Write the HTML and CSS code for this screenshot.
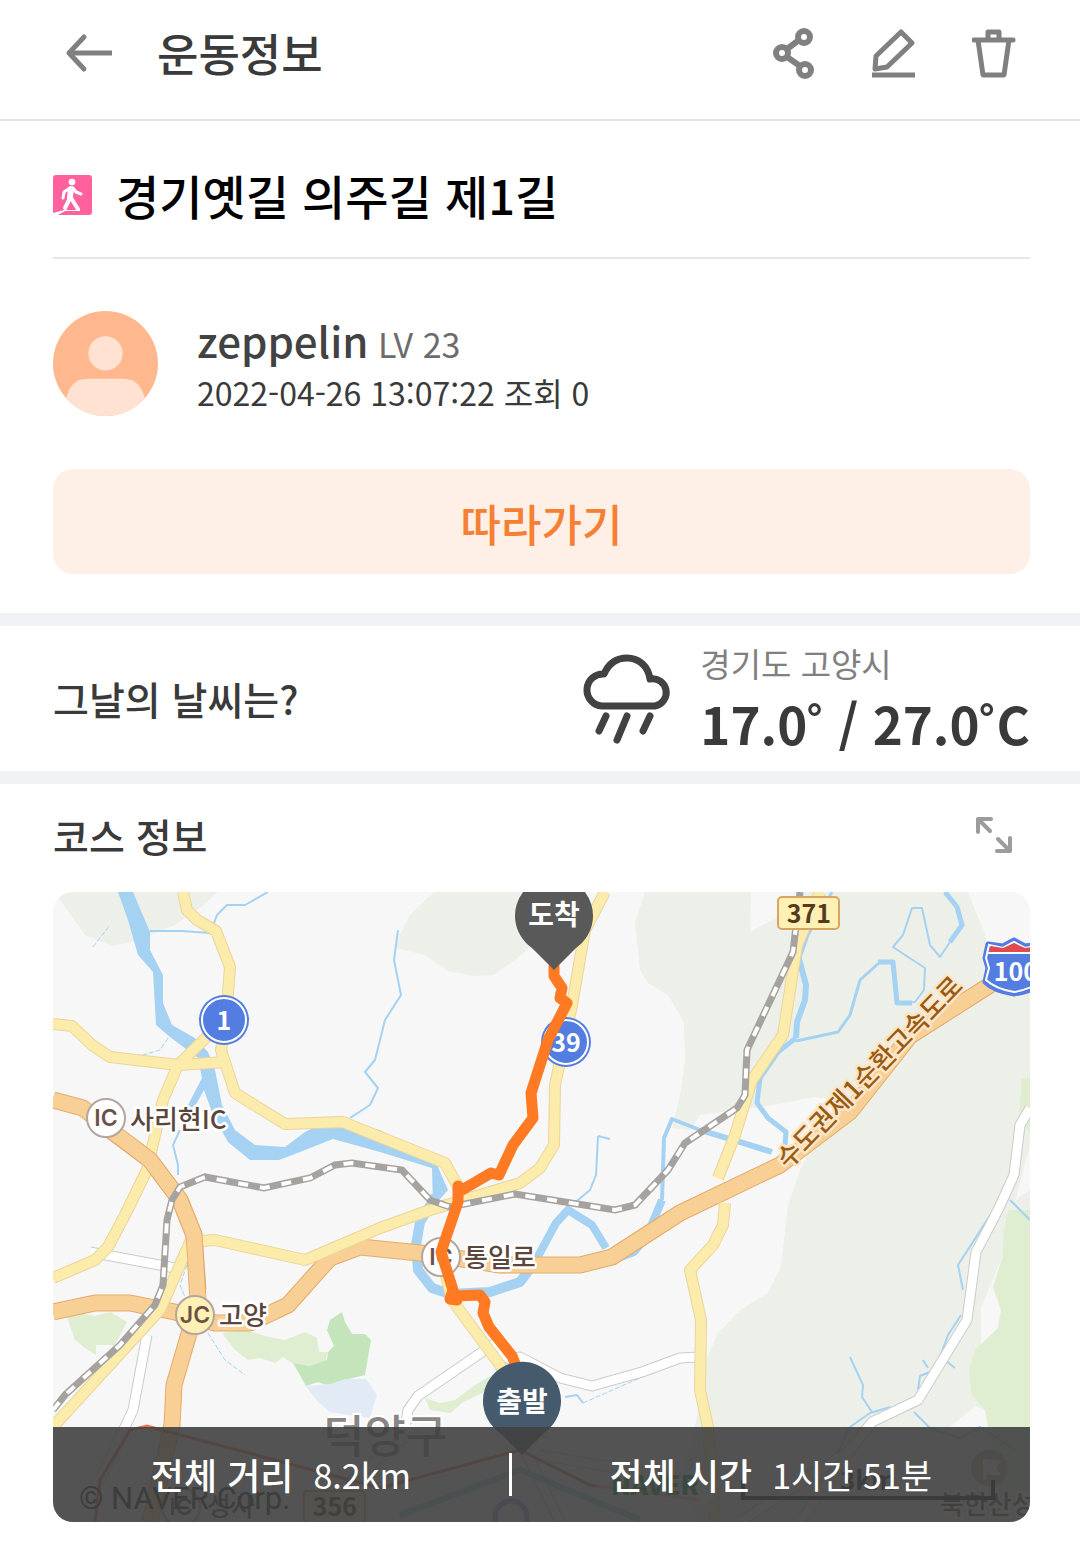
FILE: index.html
```html
<!DOCTYPE html>
<html lang="ko">
<head>
    <meta charset="UTF-8">
    <meta name="viewport" content="width=device-width, initial-scale=1">
    <title>운동정보</title>
    <link rel="stylesheet" href="styles.css">
</head>
<body>
    <header class="top-bar">
        <button class="icon-button" type="button" aria-label="뒤로">
            <svg width="48" height="52" viewBox="0 0 48 52" fill="none" stroke="#808080" stroke-width="5" stroke-linecap="round" stroke-linejoin="round"><path d="M20 10 5 26 20 42"/><path d="M5 26H48" stroke-linecap="butt"/></svg>
        </button>
        <h1>운동정보</h1>
        <div class="actions">
            <button class="icon-button" type="button" aria-label="공유">
                <svg width="44" height="52" viewBox="0 0 44 52" fill="none" stroke="#808080" stroke-width="6"><circle cx="32" cy="10" r="6"/><circle cx="10" cy="26" r="6"/><circle cx="33" cy="43" r="6"/><path d="M15 22 27 13M15 30 28 39"/></svg>
            </button>
            <button class="icon-button" type="button" aria-label="수정">
                <svg width="44" height="52" viewBox="0 0 44 52" fill="none" stroke="#808080" stroke-width="5" stroke-linejoin="round"><path d="M29 5 40 16 15 40 3 42 4 29Z"/><path d="M0 48H43"/></svg>
            </button>
            <button class="icon-button" type="button" aria-label="삭제">
                <svg width="44" height="52" viewBox="0 0 44 52" fill="none" stroke="#808080" stroke-width="5" stroke-linejoin="round" stroke-linecap="round"><path d="M2 13H41M16 12V5H27V12M6 13 11 48H32L37 13"/></svg>
            </button>
        </div>
    </header>

    <main>
        <section class="workout">
            <div class="workout-title">
                <svg width="39" height="40" viewBox="0 0 39 40"><rect width="39" height="40" rx="3" fill="#ff619d"/><circle cx="19" cy="7" r="3.3" fill="#fff"/><g fill="none" stroke="#fff" stroke-linecap="round" stroke-linejoin="round"><path stroke-width="3" d="M17 13 11 17 10 23M20 13 23 17 28 19"/><path stroke-width="6" d="M18 14 17 22"/><path stroke-width="4" d="M18 23 25 34M17 23 12 33"/></g><path fill="#fff" d="M0 40V38L11 35H27V36H12L5 40Z"/></svg>
                <h2>경기옛길 의주길 제1길</h2>
            </div>
            <div class="user">
                <svg class="avatar" viewBox="0 0 104 104"><clipPath id="face"><circle cx="52" cy="52" r="52"/></clipPath><g clip-path="url(#face)"><rect width="104" height="104" fill="#ffb88d"/><g fill="#ffe2d1"><circle cx="52" cy="42" r="17"/><path d="M12 104V91Q16 67 34 67H70Q88 67 92 91V104Z"/></g></g></svg>
                <div class="user-info">
                    <p class="user-name"><strong>zeppelin</strong> <span>LV 23</span></p>
                    <p class="user-date">2022-04-26 13:07:22 조회 0</p>
                </div>
            </div>
            <button class="follow" type="button">따라가기</button>
        </section>

        <section class="weather">
            <h3>그날의 날씨는?</h3>
            <svg width="90" height="92" viewBox="0 0 90 92" fill="none" stroke="#424242" stroke-width="7" stroke-linecap="round" stroke-linejoin="round"><path d="M20 54H73A13 13 0 0 0 68 27C66 14 57 6 45 6S26 13 22 22A16 16 0 0 0 20 54Z"/><path d="M24 64 17 79M45 64 35 88M68 64 61 79"/></svg>
            <div class="weather-info">
                <p class="place">경기도 고양시</p>
                <p class="temp">17.0˚ / 27.0˚C</p>
            </div>
        </section>

        <section class="course">
            <div class="course-head">
                <h3>코스 정보</h3>
                <button class="icon-button" type="button" aria-label="크게 보기">
                    <svg width="36" height="36" viewBox="0 0 36 36" fill="none" stroke="#9c9c9c" stroke-width="4" stroke-linecap="round" stroke-linejoin="round"><path d="M2 15V2H15M3 3 14 14M21 34H34V21M33 33 22 22"/></svg>
                </button>
            </div>
            <div class="map">
                <svg class="map-canvas" viewBox="53 892 977 630">
                    <rect class="land" x="53" y="892" width="977" height="630"/>
                    <!-- hills -->
                    <g class="hill">
                        <path d="M53 892 60 900 85 935 112 946 135 941 175 925 200 908 218 892Z"/>
                        <path d="M434 892 410 915 400 935 396 948 425 955 448 971 475 976 493 975 515 960 550 930V892Z"/>
                        <path d="M645 892 635 922 640 970 648 983 668 995 684 1022 685 1060 680 1095 672 1128 690 1130 700 1115 760 1107 815 1097 840 1100 820 1130 800 1170 788 1205 784 1240 781 1267 768 1293 740 1310 718 1333 706 1360 695 1427 680 1480 700 1522H1030V892Z"/>
                    </g>
                    <g class="land">
                        <path d="M751 892 750 932 790 910 800 892Z"/>
                        <path d="M968 892 985 935 995 975H1030V892Z"/>
                        <path d="M1030 1145 1018 1190 1003 1255 981 1308V1345L1010 1330 1015 1200 1030 1190Z"/>
                        <path d="M950 1427 975 1406 990 1412V1427Z"/>
                    </g>
                    <g class="park">
                        <path d="M1030 1210H1010Q1004 1212 1003 1255L993 1287 1001 1310 998 1328 975 1350 969 1370 971 1393 985 1410 988 1427 1000 1500H1030Z"/>
                        <path d="M1030 1077 1022 1079 1019 1110 1030 1135Z"/>
                        <path d="M67 1317 80 1313 95 1316 110 1312 127 1322 115 1345 96 1345V1355L85 1348 75 1340Z"/>
                        <path d="M222 1333 245 1330 265 1336 285 1340 305 1332 317 1338 319 1352 328 1352 325 1362 310 1366 292 1363 283 1357 275 1363 260 1358 248 1360 235 1350Z"/>
                        <path d="M425 1398 440 1403 455 1400 475 1385 492 1375 484 1392 462 1403 450 1413 430 1410Z"/>
                    </g>
                    <path fill="#c4e5bb" d="M342 1312 345 1322 352 1334 365 1334 371 1340 365 1375 345 1380 328 1386 318 1382 306 1386 293 1363 310 1366 327 1360 328 1352 334 1346 327 1330 330 1320Z"/>
                    <path fill="#e2ebf5" d="M306 1386 330 1384 345 1379 366 1379 377 1395 370 1418 330 1412 318 1402Z"/>
                    <!-- rivers -->
                    <path class="river-fill" d="M118 892H133L150 932V950L163 975V1003L172 1025 195 1038 208 1052 215 1070 222 1105 235 1130 255 1145 285 1147 305 1132 330 1120 380 1130 435 1160 448 1190 433 1207 432 1168 380 1152 333 1139 300 1152 279 1160H250L228 1142 213 1115 204 1090 193 1110 188 1105 202 1078 198 1058 170 1037 156 1025 153 972 138 955 128 920Z"/>
                    <g class="river">
                        <path stroke-width="10" d="M436 1196 420 1222 416 1245 418 1270 432 1288 450 1294 490 1292 520 1282 535 1262"/>
                        <path stroke-width="8" d="M535 1262 556 1223 568 1210 592 1225 606 1248M618 1258 634 1252 646 1238 662 1200"/>
                        <path stroke-width="4" d="M662 1200 664 1138 672 1119 700 1130"/>
                        <path stroke-width="6" d="M700 1130 740 1142 772 1152M798 955 806 985 805 1000 797 1022 796 1038"/>
                        <path stroke-width="5" d="M796 1038 778 1052 760 1078 757 1103 768 1118 786 1132 785 1145"/>
                        <path stroke-width="3" d="M832 892 808 935 800 958M796 1041 838 1032 850 1015 860 980 880 962"/>
                        <path stroke-width="2" d="M897 1003 915 1002 924 990 925 968 905 955 893 947 903 935 912 908 922 908 930 945 940 957 950 942"/>
                        <path stroke-width="5" d="M878 962H893L897 1003H912M945 892 957 907 962 925 950 942"/>
                        <path stroke-width="2" d="M150 931 182 931 210 933 217 915 227 905H245L268 892M398 930 394 960 398 980 401 995 385 1020 375 1060 365 1072 378 1088 370 1105 350 1118M180 1130 173 1145 178 1165V1175M598 1136 596 1175 590 1190 572 1205M598 1136 610 1139M538 1085 530 1120"/>
                        <path stroke-width="2" d="M1000 1200 958 1265 963 1290M961 1315 948 1335 935 1370 920 1376 918 1390M850 1357 863 1385 862 1397 872 1412M890 1407 870 1413 850 1427 820 1490M923 1360 928 1368M945 1360 955 1368M914 1412 930 1428 960 1438 980 1427 1015 1450M1010 1200 1030 1220M565 1397 577 1395 583 1403"/>
                        <path stroke-width="1" stroke-dasharray="5 2" d="M93 947 110 925M168 1038 160 1050 140 1056M187 1230V1265L180 1285 185 1297M208 1333 225 1360 245 1375M583 1403 640 1378 680 1362"/>
                    </g>
                    <!-- minor roads -->
                    <g class="road">
                        <path class="minor-edge" d="M1030 1108 1020 1125 1014 1175 998 1210 976 1252 967 1320 918 1400 872 1422 850 1450 800 1522M90 1252 175 1268M147 1335 133 1410 100 1480M405 1427 408 1410 418 1396 485 1350 500 1340M485 1345 515 1362 520 1357 560 1378 592 1386 642 1372 680 1358 700 1357M515 1430 560 1522M540 1455 690 1480M415 1427 330 1500M850 1450 740 1522"/>
                        <path class="minor" d="M1030 1108 1020 1125 1014 1175 998 1210 976 1252 967 1320 918 1400 872 1422 850 1450 800 1522M90 1252 175 1268M147 1335 133 1410 100 1480M405 1427 408 1410 418 1396 485 1350 500 1340M485 1345 515 1362 520 1357 560 1378 592 1386 642 1372 680 1358 700 1357M515 1430 560 1522M540 1455 690 1480M415 1427 330 1500M850 1450 740 1522"/>
                    </g>
                    <!-- highways -->
                    <g class="road">
                        <path class="highway-edge" d="M53 1100 83 1108 110 1130 150 1160 180 1200 194 1235 198 1300 190 1330 174 1385 172 1425 150 1522M53 1312 95 1303H130L175 1312 215 1323 250 1323 288 1305 330 1258 360 1247 430 1254 500 1265 580 1265 612 1257 680 1213 780 1165 850 1112 910 1036 990 985 1030 962"/>
                        <path class="highway" d="M53 1100 83 1108 110 1130 150 1160 180 1200 194 1235 198 1300 190 1330 174 1385 172 1425 150 1522M53 1312 95 1303H130L175 1312 215 1323 250 1323 288 1305 330 1258 360 1247 430 1254 500 1265 580 1265 612 1257 680 1213 780 1165 850 1112 910 1036 990 985 1030 962"/>
                        <path class="main-edge" d="M183 892 187 910 197 920 216 931 230 967 226 1020 221 1050 235 1093 285 1124 343 1122 370 1133 445 1163 460 1190M53 1024 72 1026 92 1045 110 1057 178 1065 225 1062M222 1022 178 1065 163 1100 147 1170 125 1215 108 1247 95 1260 53 1278M605 892 585 930 572 1005 555 1085 554 1145 540 1168 520 1183 480 1195 430 1210 380 1228 305 1260 215 1240 190 1242 160 1310 53 1427M443 1263 452 1300 500 1365 540 1440M820 892 797 945 783 1035 752 1080 735 1135 718 1178M725 1203 723 1225 713 1245 690 1270 701 1320 700 1390 708 1427 715 1522"/>
                        <path class="main" d="M183 892 187 910 197 920 216 931 230 967 226 1020 221 1050 235 1093 285 1124 343 1122 370 1133 445 1163 460 1190M53 1024 72 1026 92 1045 110 1057 178 1065 225 1062M222 1022 178 1065 163 1100 147 1170 125 1215 108 1247 95 1260 53 1278M605 892 585 930 572 1005 555 1085 554 1145 540 1168 520 1183 480 1195 430 1210 380 1228 305 1260 215 1240 190 1242 160 1310 53 1427M443 1263 452 1300 500 1365 540 1440M820 892 797 945 783 1035 752 1080 735 1135 718 1178M725 1203 723 1225 713 1245 690 1270 701 1320 700 1390 708 1427 715 1522"/>
                        <path class="highway-edge" d="M110 1130 150 1160 180 1200 194 1235 198 1290"/>
                        <path class="highway" d="M108 1128 150 1160 180 1200 194 1235 198 1300"/>
                    </g>
                    <!-- railway -->
                    <path class="rail" d="M53 1410 65 1395 120 1345 155 1305 163 1285 167 1220 172 1200 180 1187 205 1177 264 1188 310 1178 335 1165 352 1163 402 1170 430 1200 450 1207 515 1194 615 1210 635 1205 668 1170 685 1143 737 1108 745 1095 747 1050 793 952 800 892"/>
                    <path class="rail-dash" d="M53 1410 65 1395 120 1345 155 1305 163 1285 167 1220 172 1200 180 1187 205 1177 264 1188 310 1178 335 1165 352 1163 402 1170 430 1200 450 1207 515 1194 615 1210 635 1205 668 1170 685 1143 737 1108 745 1095 747 1050 793 952 800 892"/>
                    <!-- subway -->
                    <path fill="none" stroke="#ef7350" stroke-width="3" d="M95 1522 100 1480 130 1430 147 1426 350 1480 380 1488 520 1450 590 1485 700 1500M1000 1510 960 1500"/>
                    <path fill="none" stroke="#a5d2f3" stroke-width="6" d="M400 1515 520 1470 640 1520"/>

                    <!-- road signs -->
                    <g class="sign">
                        <circle cx="224" cy="1020" r="25" fill="#537de0"/><circle cx="224" cy="1020" r="22" fill="#537de0" stroke="#fff" stroke-width="2"/>
                        <text x="224" y="1030" fill="#fff">1</text>
                        <circle cx="566" cy="1042" r="25" fill="#537de0"/><circle cx="566" cy="1042" r="22" fill="#537de0" stroke="#fff" stroke-width="2"/>
                        <text x="566" y="1052" fill="#fff">39</text>
                        <rect x="778" y="897" width="61" height="32" rx="4" fill="#fff1b4" stroke="#d9a566" stroke-width="2"/>
                        <text x="809" y="923" fill="#553b1c">371</text>
                        <path fill="#537de0" stroke="#537de0" stroke-width="5" stroke-linejoin="round" d="M988 944 1003 946 1014 940 1025 946 1040 944 1044 958 1041 968 1044 982Q1034 991 1014 994 994 991 985 982L988 968 985 958Z"/>
                        <path fill="#537de0" stroke="#fff" stroke-width="2" d="M989 945 1003 948 1014 942 1025 948 1039 945 1043 958 1040 968 1042 980Q1032 989 1014 992 996 989 986 980L989 968 986 958Z"/>
                        <path fill="#df4b51" d="M991 946 1003 948 1014 943 1025 948 1038 946 1040 952H989Z"/><path stroke="#fff" stroke-width="2" d="M988 953H1040"/>
                        <text x="1016" y="981" fill="#fff">100</text>
                        <rect x="304" y="1491" width="61" height="32" rx="4" fill="#fff1b4" stroke="#d9a566" stroke-width="2"/>
                        <text x="335" y="1516" fill="#553b1c">356</text>
                    </g>
                    <g class="junction">
                        <circle cx="106" cy="1118" r="19"/><text x="106" y="1126">IC</text>
                        <circle cx="441" cy="1257" r="19"/><text x="441" y="1265">IC</text>
                        <circle cx="195" cy="1315" r="19" fill="#fff1b4"/><text x="195" y="1323">JC</text>
                        <circle cx="181" cy="1507" r="19"/><text x="181" y="1515">IC</text>
                    </g>
                    <g class="place-label">
                        <text x="130" y="1129">사리현IC</text>
                        <text x="464" y="1267">통일로</text>
                        <text x="219" y="1325">고양</text>
                        <text x="207" y="1516">성사</text>
                        <text x="940" y="1514">북한산성</text>
                    </g>
                    <text class="district" x="323" y="1453">덕양구</text>
                    <text class="highway-label" transform="translate(788 1170) rotate(-46)">수도권제1순환고속도로</text>
                    <circle cx="989" cy="1468" r="18" fill="#c7b49b"/><path fill="#fff" d="M983 1459 1002 1461 996 1467 1001 1475H986V1480H983Z"/>
                    <circle cx="511" cy="1517" r="16" fill="none" stroke="#8ca8dc" stroke-width="5"/>

                    <path class="route" d="M554 966V976L562 988 560 998 567 1003 548 1040 531 1093 533 1118 513 1145 499 1175 491 1173 462 1190 458 1186 458 1202 441 1252 453 1290 450 1299 457 1300 455 1296 480 1295 485 1302 483 1313 489 1327 512 1356 516 1366"/>
                    <g class="marker">
                        <path fill="#595959" d="M554 970 532 948A39 39 0 1 1 576 948Z"/><text x="554" y="925">도착</text>
                        <path fill="#465a6e" d="M522 1455 500 1433A39 39 0 1 1 544 1433Z"/><text x="522" y="1412">출발</text>
                    </g>
                    <rect x="598" y="1470" width="120" height="34" rx="17" fill="#fff" opacity=".6"/>
                    <text class="logo" x="611" y="1495">NAVER</text>
                    <text class="copyright" x="79" y="1509">© NAVER Corp.</text>
                    <path fill="none" stroke="#111" stroke-width="4" d="M743 1480V1498H993V1480"/>
                    <text class="scale" x="868" y="1490">3km</text>
                </svg>
                <div class="summary">
                    <p><strong>전체 거리</strong><span>8.2km</span></p>
                    <p><strong>전체 시간</strong><span>1시간 51분</span></p>
                </div>
            </div>
        </section>
    </main>
</body>
</html>
```
FILE: styles.css
```css
:root {
    --text-color: #3a3a3a;
    --sub-color: #808080;
    --point-color: #f58033;
    --band-color: #f1f2f5;
}
* {
    box-sizing: border-box;
}
body {
    margin: 0;
    background-color: #fff;
    color: var(--text-color);
    font-family: "Noto Sans CJK KR", sans-serif;
}
h1, h2, h3, p {
    margin: 0;
    font-weight: 500;
}
svg {
    display: block;
    flex: none;
}
.icon-button {
    padding: 0;
    border: 0;
    background: none;
}

.top-bar {
    display: flex;
    align-items: center;
    padding: 20px 64px 33px;
    border-bottom: 2px solid #e4e4e4;
}
.top-bar h1 {
    margin-left: 45px;
    font-size: 45px;
    line-height: 66px;
}
.actions {
    display: flex;
    gap: 56px;
    margin-left: auto;
}

.workout {
    padding: 41px 50px 39px 53px;
}
.workout-title {
    display: flex;
    align-items: center;
    gap: 24px;
    padding-bottom: 29px;
    border-bottom: 2px solid #e6e6e6;
}
.workout-title h2 {
    color: #000;
    font-size: 47px;
    line-height: 66px;
}
.user {
    display: flex;
    align-items: center;
    gap: 39px;
    padding: 52px 0 53px;
}
.avatar {
    width: 105px;
}
.user-name {
    color: #6c6c6c;
    font-size: 34px;
    font-weight: 400;
    line-height: 52px;
}
.user-name strong {
    color: #424242;
    font-size: 42px;
    font-weight: 500;
}
.user-date {
    font-size: 32px;
    font-weight: 400;
    line-height: 44px;
}
.follow {
    display: block;
    width: 100%;
    padding: 22px 20px 18px;
    border: 0;
    border-radius: 20px;
    background-color: #fff0e7;
    color: var(--point-color);
    font: 500 44px/65px "Noto Sans CJK KR", sans-serif;
}

.weather {
    display: flex;
    align-items: center;
    padding: 12px 50px 14px 53px;
    border: solid var(--band-color);
    border-width: 13px 0;
}
.weather h3,
.course h3 {
    font-size: 39px;
    line-height: 54px;
}
.weather svg {
    margin-left: auto;
}
.weather-info {
    margin-left: 28px;
}
.place {
    color: var(--sub-color);
    font-size: 33px;
    font-weight: 400;
    line-height: 51px;
}
.temp {
    font-size: 51px;
    font-weight: 700;
    line-height: 68px;
}

.course {
    padding: 24px 50px 41px 53px;
}
.course-head {
    display: flex;
    align-items: center;
    justify-content: space-between;
    padding: 0 18px 30px 0;
}
.map {
    position: relative;
    overflow: hidden;
    border-radius: 20px;
}
.map-canvas {
    width: 100%;
}
.summary {
    position: absolute;
    right: 0;
    bottom: 0;
    left: 0;
    display: flex;
    padding: 26px 0;
    background-color: rgba(64, 64, 64, .9);
    color: #fff;
    font-size: 34px;
    line-height: 43px;
}
.summary p {
    display: flex;
    flex: 1 1 auto;
    justify-content: center;
    gap: 20px;
    font-weight: 400;
}
.summary p + p {
    border-left: 3px solid #fff;
}
.summary strong {
    font-size: 36px;
    font-weight: 500;
}

.land {
    fill: #f7f7f7;
}
.hill {
    fill: #ecf0e8;
}
.park {
    fill: #dfedd0;
}
.river-fill {
    fill: #a5d2f3;
}
.river {
    fill: none;
    stroke: #a5d2f3;
    stroke-linejoin: round;
}
.road {
    fill: none;
    stroke-linejoin: round;
}
.minor-edge {
    stroke: #cbcbcb;
    stroke-width: 11;
}
.minor {
    stroke: #fff;
    stroke-width: 9;
}
.main-edge {
    stroke: #ecd49a;
    stroke-width: 12;
}
.main {
    stroke: #fcecac;
    stroke-width: 10;
}
.highway-edge {
    stroke: #e5ab6c;
    stroke-width: 17;
}
.highway {
    stroke: #f8cf94;
    stroke-width: 15;
}
.rail {
    fill: none;
    stroke: #a5a29f;
    stroke-width: 7;
}
.rail-dash {
    fill: none;
    stroke: #fff;
    stroke-width: 4;
    stroke-dasharray: 10 12;
}
.route {
    fill: none;
    stroke: #ff7a22;
    stroke-width: 11;
    stroke-linecap: round;
    stroke-linejoin: round;
}
.sign text {
    font: 700 25px "Noto Sans CJK KR", sans-serif;
    text-anchor: middle;
}
.junction {
    fill: #fff;
    stroke: #b3a5a0;
    stroke-width: 2;
}
.junction text {
    fill: #6b5147;
    stroke: none;
    font: 600 23px Inter, "Liberation Sans", sans-serif;
    text-anchor: middle;
}
.place-label {
    fill: #5b463c;
    stroke: #fff;
    stroke-width: 5;
    stroke-linejoin: round;
    paint-order: stroke;
    font: 500 26px "Noto Sans CJK KR", sans-serif;
}
.district {
    fill: #8b8583;
    stroke: #fff;
    stroke-width: 4;
    paint-order: stroke;
    font: 500 45px "Noto Sans CJK KR", sans-serif;
}
.highway-label {
    fill: #985b14;
    stroke: #fde6c8;
    stroke-width: 5;
    stroke-linejoin: round;
    paint-order: stroke;
    font: 500 26px "Noto Sans CJK KR", sans-serif;
}
.marker text {
    fill: #fff;
    font: 700 28px "Noto Sans CJK KR", sans-serif;
    text-anchor: middle;
}
.logo {
    fill: #00a040;
    font: 900 26px "Noto Sans CJK KR", sans-serif;
}
.copyright {
    fill: #222;
    font: 400 31px Roboto, sans-serif;
}
.scale {
    fill: #222;
    font: 700 26px "Noto Sans CJK KR", sans-serif;
    text-anchor: middle;
}
```
